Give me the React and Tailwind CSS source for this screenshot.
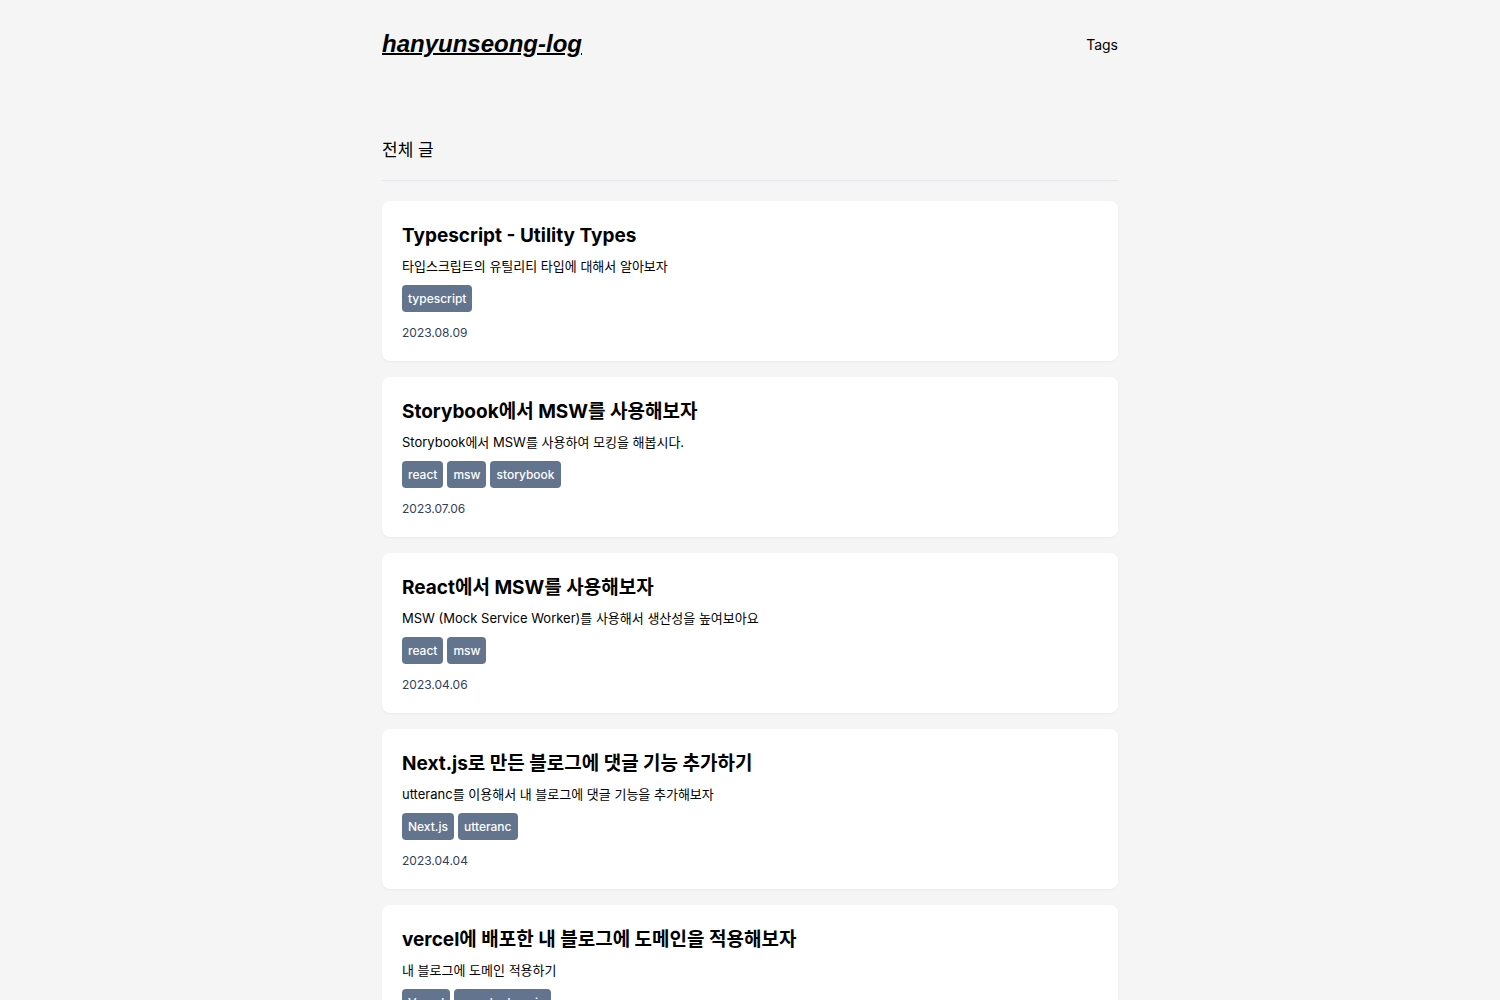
const posts = [
  { title: 'Typescript - Utility Types', description: '타입스크립트의 유틸리티 타입에 대해서 알아보자', tags: ['typescript'], date: '2023.08.09' },
  { title: 'Storybook에서 MSW를 사용해보자', description: 'Storybook에서 MSW를 사용하여 모킹을 해봅시다.', tags: ['react', 'msw', 'storybook'], date: '2023.07.06' },
  { title: 'React에서 MSW를 사용해보자', description: 'MSW (Mock Service Worker)를 사용해서 생산성을 높여보아요', tags: ['react', 'msw'], date: '2023.04.06' },
  { title: 'Next.js로 만든 블로그에 댓글 기능 추가하기', description: 'utteranc를 이용해서 내 블로그에 댓글 기능을 추가해보자', tags: ['Next.js', 'utteranc'], date: '2023.04.04' },
  { title: 'vercel에 배포한 내 블로그에 도메인을 적용해보자', description: '내 블로그에 도메인 적용하기', tags: ['Vercel', 'google domain'], date: '2023.04.03' },
];

function PostCard({ post }) {
  return (
    <li>
      <article className="flex flex-col items-start rounded-lg bg-white p-5 shadow-xs">
        <h2 className="text-[19px] font-bold leading-[30px]">
          <a href="#post">{post.title}</a>
        </h2>
        <p className="mt-1.5 text-[13px] leading-[18px]">{post.description}</p>
        <ul className="mt-2.5 flex flex-wrap gap-1">
          {post.tags.map((tag) => (
            <li key={tag}>
              <a href="#tag" className="block rounded-sm bg-slate-500 px-1.5 py-1 text-xs font-medium leading-[19px] text-white">
                {tag}
              </a>
            </li>
          ))}
        </ul>
        <time className="mt-3 text-xs leading-[17px] text-slate-700">{post.date}</time>
      </article>
    </li>
  );
}

export default function App() {
  return (
    <div className="min-h-screen bg-neutral-100 pb-12 font-['Inter','Noto_Sans_CJK_KR',sans-serif] text-black">
      <div className="mx-auto max-w-3xl px-4">
        <header className="flex h-22 items-center justify-between">
          <a href="#home" className="font-['Liberation_Sans',sans-serif] text-2xl font-bold italic underline decoration-2">hanyunseong-log</a>
          <nav>
            <a href="#tags" className="text-sm">Tags</a>
          </nav>
        </header>
        <main className="pt-12">
          <h1 className="border-b border-gray-200 pb-4 text-[17px] leading-7">전체 글</h1>
          <ul className="mt-5 flex flex-col gap-4">
            {posts.map((post) => (
              <PostCard key={post.title} post={post} />
            ))}
          </ul>
        </main>
      </div>
    </div>
  );
}
